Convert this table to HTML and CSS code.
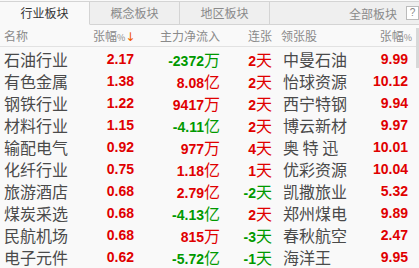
FILE: index.html
```html
<!DOCTYPE html>
<html>
<head>
<meta charset="utf-8">
<link rel="stylesheet" href="styles.css">
</head>
<body>
<div class="panel">
  <div class="tabs">
    <div class="tab active">行业板块</div>
    <div class="tab">概念板块</div>
    <div class="tab">地区板块</div>
    <div class="tab-rest"><span class="all">全部板块</span><span class="help">?</span></div>
  </div>
  <div class="list">
    <div class="row head">
      <span class="c1">名称</span>
      <span class="c2 h2">张幅<small>%</small><b class="arrow">↓</b></span>
      <span class="c3">主力净流入</span>
      <span class="c4">连张</span>
      <span class="c5 h5">领张股</span>
      <span class="c6 h6">张幅<small>%</small></span>
    </div>
    <div class="row"><span class="c1">石油行业</span><span class="c2 n red">2.17</span><span class="c3 green"><b class="n">-2372</b>万</span><span class="c4 red"><b class="n">2</b>天</span><span class="c5">中曼石油</span><span class="c6 n red">9.99</span></div>
    <div class="row"><span class="c1">有色金属</span><span class="c2 n red">1.38</span><span class="c3 red"><b class="n">8.08</b>亿</span><span class="c4 red"><b class="n">2</b>天</span><span class="c5">怡球资源</span><span class="c6 n red">10.12</span></div>
    <div class="row"><span class="c1">钢铁行业</span><span class="c2 n red">1.22</span><span class="c3 red"><b class="n">9417</b>万</span><span class="c4 red"><b class="n">2</b>天</span><span class="c5">西宁特钢</span><span class="c6 n red">9.94</span></div>
    <div class="row"><span class="c1">材料行业</span><span class="c2 n red">1.15</span><span class="c3 green"><b class="n">-4.11</b>亿</span><span class="c4 red"><b class="n">2</b>天</span><span class="c5">博云新材</span><span class="c6 n red">9.97</span></div>
    <div class="row"><span class="c1">输配电气</span><span class="c2 n red">0.92</span><span class="c3 red"><b class="n">977</b>万</span><span class="c4 red"><b class="n">4</b>天</span><span class="c5">奥 特 迅</span><span class="c6 n red">10.01</span></div>
    <div class="row"><span class="c1">化纤行业</span><span class="c2 n red">0.75</span><span class="c3 red"><b class="n">1.18</b>亿</span><span class="c4 red"><b class="n">1</b>天</span><span class="c5">优彩资源</span><span class="c6 n red">10.04</span></div>
    <div class="row"><span class="c1">旅游酒店</span><span class="c2 n red">0.68</span><span class="c3 red"><b class="n">2.79</b>亿</span><span class="c4 green"><b class="n">-2</b>天</span><span class="c5">凯撒旅业</span><span class="c6 n red">5.32</span></div>
    <div class="row"><span class="c1">煤炭采选</span><span class="c2 n red">0.68</span><span class="c3 green"><b class="n">-4.13</b>亿</span><span class="c4 red"><b class="n">2</b>天</span><span class="c5">郑州煤电</span><span class="c6 n red">9.89</span></div>
    <div class="row"><span class="c1">民航机场</span><span class="c2 n red">0.68</span><span class="c3 red"><b class="n">815</b>万</span><span class="c4 green"><b class="n">-3</b>天</span><span class="c5">春秋航空</span><span class="c6 n red">2.47</span></div>
    <div class="row"><span class="c1">电子元件</span><span class="c2 n red">0.62</span><span class="c3 green"><b class="n">-5.72</b>亿</span><span class="c4 green"><b class="n">-1</b>天</span><span class="c5">海洋王</span><span class="c6 n red">9.95</span></div>
    <div class="thumb"></div>
  </div>
</div>
</body>
</html>
```
FILE: styles.css
```css
html, body {
  margin: 0;
  padding: 0;
  background: #f9f9f9;
}
body {
  width: 419px;
  height: 268px;
  overflow: hidden;
  font-family: "Noto Sans CJK SC", "Liberation Sans", sans-serif;
}
.panel {
  padding-top: 1px;
}
.tabs {
  display: flex;
  height: 23px;
  border-top: 1px solid #d4d4d4;
}
.tab {
  width: 90px;
  box-sizing: border-box;
  border-right: 1px solid #d4d4d4;
  border-bottom: 1px solid #d4d4d4;
  background: #efefef;
  color: #8a8a8a;
  font-size: 12px;
  line-height: 22px;
  text-align: center;
}
.tab.active {
  background: #f9f9f9;
  color: #333;
  border-bottom-color: transparent;
}
.tab-rest {
  flex: 1;
  display: flex;
  align-items: center;
  justify-content: flex-end;
  gap: 9px;
  border-bottom: 1px solid #d4d4d4;
  background: #efefef;
}
.all {
  font-size: 12px;
  color: #8a8a8a;
}
.help {
  width: 11px;
  height: 12px;
  border: 1px solid #bbb;
  background: #fff;
  font-family: "Liberation Sans", sans-serif;
  font-size: 10px;
  color: #888;
  line-height: 12px;
  text-align: center;
}
.list {
  position: relative;
}
.row {
  display: grid;
  grid-template-columns: 88px 42px 86px 52px 104px 32px;
  align-items: center;
  height: 22px;
  padding-left: 4px;
  font-size: 16px;
  color: #4a4a4a;
  white-space: nowrap;
}
.row.head {
  height: 21px;
  border-bottom: 1px solid #e2e2e2;
  font-size: 12px;
  color: #8a8a8a;
}
.c1 { justify-self: start; }
.c2, .c3, .c4, .c6 { justify-self: end; }
.c5 { justify-self: start; padding-left: 11px; }
.h2 { justify-self: start; padding-left: 1px; }
.h5 { padding-left: 9px; }
.h6 { margin-right: -4px; }
.head small { font-size: 9px; }
.arrow {
  color: #f05a00;
  font-weight: normal;
  font-family: "DejaVu Sans", sans-serif;
  font-size: 12px;
}
.n {
  font-family: "Liberation Sans", sans-serif;
  font-weight: bold;
  font-size: 14px;
}
.red { color: #e00000; }
.green { color: #009900; }
.thumb {
  position: absolute;
  right: 0;
  top: 3px;
  width: 3px;
  height: 40px;
  background: #d8d8d8;
}
```
